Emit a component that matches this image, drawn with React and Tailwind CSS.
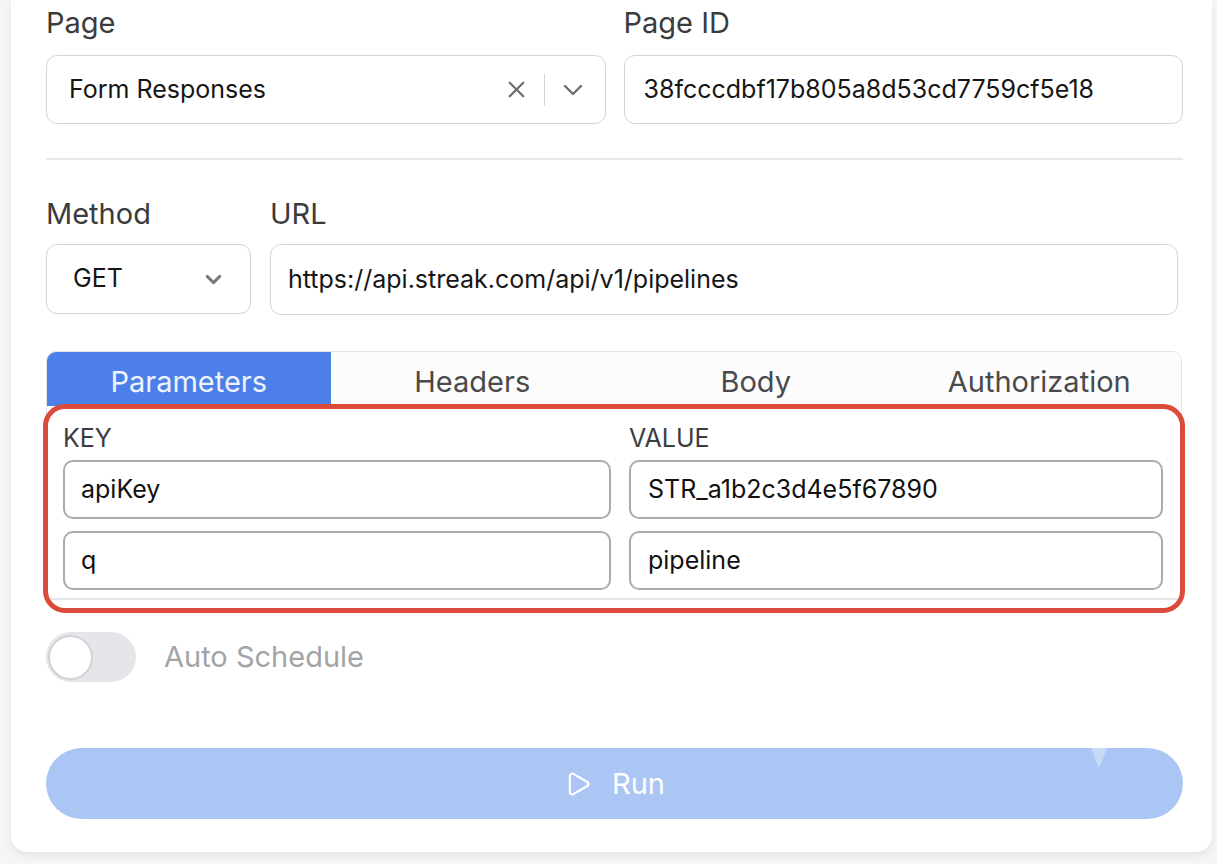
import { X, ChevronDown, Play } from 'lucide-react';

const tabs = ['Parameters', 'Headers', 'Body', 'Authorization'];

const params = [
  { key: 'apiKey', value: 'STR_a1b2c3d4e5f67890' },
  { key: 'q', value: 'pipeline' },
];

function Label({ children, className = '' }) {
  return (
    <div className={`text-[29px] leading-[34px] text-[#3b3b3d] ${className}`}>{children}</div>
  );
}

export default function App() {
  return (
    <div
      className="min-h-screen bg-[#f6f6f7] pl-[11px] pr-[5px] pb-[12px]"
      style={{ fontFamily: 'Inter, "Noto Sans", sans-serif' }}
    >
      <div className="bg-white rounded-b-[16px] shadow-[0_4px_10px_rgba(0,0,0,0.08)] pl-[35px] pr-[29px] pt-[6px] pb-[33px]">
        {/* page picker */}
        <div className="grid grid-cols-2 gap-[18px]">
          <div>
            <Label className="mb-[15px]">Page</Label>
            <div className="h-[69px] border border-[#d4d4d8] rounded-[11px] flex items-center pl-[22px] pr-[16px]">
              <span className="flex-1 text-[25px] text-[#161616]">Form Responses</span>
              <X size={27} strokeWidth={2} className="text-[#6e6e70]" />
              <span className="ml-[14px] mr-[12px] w-px h-[32px] bg-[#d4d4d8]" />
              <ChevronDown size={32} strokeWidth={1.8} className="text-[#6e6e70]" />
            </div>
          </div>
          <div>
            <Label className="mb-[15px]">Page ID</Label>
            <div className="h-[69px] border border-[#d4d4d8] rounded-[11px] flex items-center pl-[19px] text-[25px] text-[#161616]">
              38fcccdbf17b805a8d53cd7759cf5e18
            </div>
          </div>
        </div>

        <div className="mt-[34px] h-[2px] bg-[#e8e8ea]" />

        {/* request line */}
        <div className="mt-[37px] flex gap-[19px] pr-[5px]">
          <div className="w-[205px]">
            <Label className="mb-[13px]">Method</Label>
            <div className="h-[70px] border border-[#d4d4d8] rounded-[11px] flex items-center pl-[26px] pr-[24px]">
              <span className="flex-1 text-[25px] text-[#161616]">GET</span>
              <ChevronDown size={25} strokeWidth={2.8} className="text-[#7a7a7c]" />
            </div>
          </div>
          <div className="flex-1">
            <Label className="mb-[13px]">URL</Label>
            <div className="h-[71px] border border-[#d4d4d8] rounded-[11px] flex items-center pl-[17px] text-[25px] text-[#161616]">
              https://api.streak.com/api/v1/pipelines
            </div>
          </div>
        </div>

        {/* tabs + params */}
        <div className="relative mt-[36px] mr-[1px]">
          <div className="border border-[#e4e5e8] rounded-t-[10px] bg-[#f4f5f7] overflow-hidden">
            <div className="grid grid-cols-4 h-[54px]">
              {tabs.map((t, i) => (
                <div
                  key={t}
                  className={
                    i === 0
                      ? 'flex items-center justify-center pt-[6px] bg-[#4c80e8] text-[#eef3fd] text-[29px]'
                      : 'flex items-center justify-center pt-[6px] bg-[#fcfcfd] text-[#4a4a4c] text-[29px]'
                  }
                >
                  {t}
                </div>
              ))}
            </div>
            <div className="bg-white pl-[16px] pr-[18px] pt-[19px] pb-[8px] border-b border-[#e4e5e8]">
              <div className="grid grid-cols-[548px_1fr] gap-x-[18px] gap-y-[12px]">
                <div className="text-[25px] leading-[26px] text-[#3d3d3f] -mb-[3px]">KEY</div>
                <div className="text-[25px] leading-[26px] text-[#3d3d3f] -mb-[3px]">VALUE</div>
                {params.map((p) => [
                  <div
                    key={p.key + 'k'}
                    className="h-[59px] border-2 border-[#a9abaf] rounded-[10px] flex items-center pl-[16px] text-[25px] text-[#111]"
                  >
                    {p.key}
                  </div>,
                  <div
                    key={p.key + 'v'}
                    className="h-[59px] border-2 border-[#a9abaf] rounded-[10px] flex items-center pl-[17px] text-[25px] text-[#111]"
                  >
                    {p.value}
                  </div>,
                ])}
              </div>
            </div>
          </div>
          {/* highlight ring over the params panel */}
          <div className="pointer-events-none absolute left-[-3px] right-[-3px] top-[53px] h-[209px] border-[5px] border-[#dc4a3b] rounded-[22px]" />
        </div>

        {/* schedule switch */}
        <div className="mt-[32px] flex items-center gap-[28px]">
          <div className="w-[90px] h-[50px] rounded-full bg-[#e5e6e9] flex items-center pl-[2px]">
            <div className="w-[45px] h-[45px] rounded-full bg-white border-2 border-[#d2d3d6]" />
          </div>
          <span className="text-[29px] text-[#a3a4a7]">Auto Schedule</span>
        </div>

        {/* run */}
        <div className="relative mt-[66px]">
          <button className="w-full h-[71px] rounded-full bg-[#abc6f4] flex items-center justify-center gap-[20px] text-white text-[29px]">
            <Play size={28} strokeWidth={1.8} />
            Run
          </button>
          <svg
            className="absolute top-0 left-[1045px]"
            width="16"
            height="20"
            viewBox="0 0 16 20"
          >
            <path d="M0 0 L16 0 L9 18 Q8 20 7 18 Z" fill="#c8d8f7" />
          </svg>
        </div>
      </div>
    </div>
  );
}
